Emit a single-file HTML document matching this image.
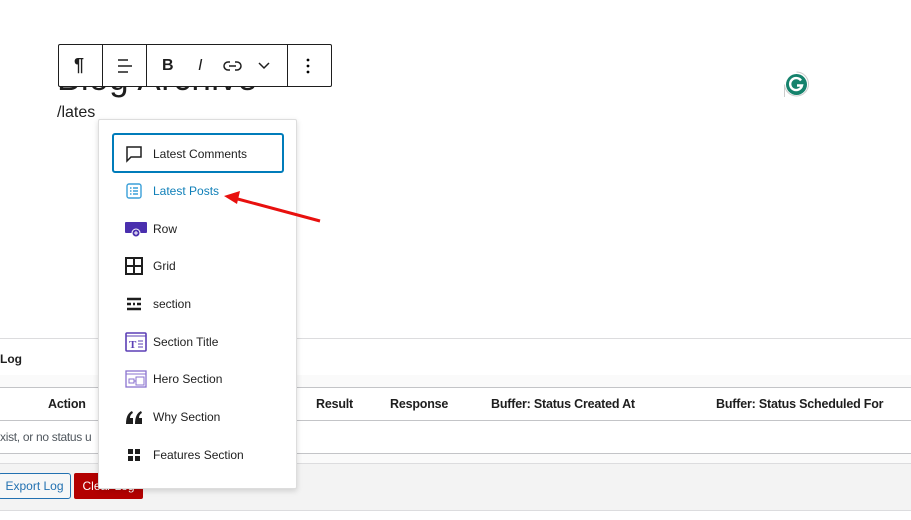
<!DOCTYPE html>
<html><head><meta charset="utf-8"><style>
*{box-sizing:border-box;margin:0;padding:0}
body{width:911px;height:520px;overflow:hidden;background:#fff;font-family:"Liberation Sans",sans-serif;color:#1e1e1e;position:relative}
.abs{position:absolute}
.hl{position:absolute;left:0;width:911px;height:1px;background:#dcdcde}
.th{position:absolute;top:397px;font-size:12.5px;font-weight:bold;letter-spacing:-0.2px}
.tb{position:absolute;left:58px;top:44px;width:274px;height:43px;border:1px solid #1e1e1e;background:#fff;border-radius:2px}
.tb .sep{position:absolute;top:0;width:1px;height:41px;background:#1e1e1e}
.menu{position:absolute;left:98px;top:119px;width:199px;height:370px;background:#fff;border:1px solid #ddd;box-shadow:0 2px 6px rgba(0,0,0,.15);border-radius:2px}
.it{position:absolute;left:0;height:20px;font-size:12px;display:flex;align-items:center}
.it svg{position:absolute;left:26px}
.it span{position:absolute;left:54px;white-space:nowrap}
</style></head><body>
<div class="abs" style="left:57px;top:62px;font-size:35px;color:#1e1e1e;line-height:34px;letter-spacing:0.5px">Blog Archive</div>
<div class="abs" style="left:57px;top:103px;font-size:16px;line-height:20px">/lates</div>
<div class="tb">
 <div class="sep" style="left:43px"></div><div class="sep" style="left:87px"></div><div class="sep" style="left:228px"></div>
 <div class="abs" style="left:15px;top:10px;font-size:18px;font-weight:bold">¶</div>
 <svg class="abs" style="left:57px;top:12px" width="18" height="18"><path d="M2 3h10M2 9h14M2 15h10" stroke="#1e1e1e" stroke-width="1.5"/></svg>
 <div class="abs" style="left:103px;top:12px;font-size:16px;font-weight:bold">B</div>
 <div class="abs" style="left:139px;top:12px;font-size:16px;font-style:italic">I</div>
 <svg class="abs" style="left:164px;top:14px" width="20" height="14"><path d="M7 3H5a4 4 0 0 0 0 8h2M12 3h2a4 4 0 0 1 0 8h-2M6 7h7" stroke="#1e1e1e" stroke-width="1.5" fill="none"/></svg>
 <svg class="abs" style="left:199px;top:17px" width="12" height="8"><path d="M1 1l5 5 5-5" stroke="#1e1e1e" stroke-width="1.5" fill="none"/></svg>
 <svg class="abs" style="left:247px;top:12px" width="4" height="18"><circle cx="2" cy="3" r="1.4"/><circle cx="2" cy="9" r="1.4"/><circle cx="2" cy="15" r="1.4"/></svg>
</div>
<svg class="abs" style="left:783px;top:71px" width="27" height="27"><path d="M13.5 1A12 12 0 1 1 1.5 13.5V26" fill="#fff" stroke="#ccc"/><circle cx="13.5" cy="13.5" r="10.5" fill="#15826c"/><path d="M18 9.5a6 6 0 1 0 1 5h-5" stroke="#fff" stroke-width="2.4" fill="none"/></svg>

<div class="hl" style="top:338px"></div>
<div class="abs" style="left:0;top:352px;font-size:12px;font-weight:bold">Log</div>
<div class="abs" style="left:0;top:375px;width:911px;height:12px;background:#fafafa"></div>
<div class="hl" style="top:387px;background:#c3c4c7"></div>
<div class="th" style="left:48px">Action</div>
<div class="th" style="left:316px">Result</div>
<div class="th" style="left:390px">Response</div>
<div class="th" style="left:491px">Buffer: Status Created At</div>
<div class="th" style="left:716px">Buffer: Status Scheduled For</div>
<div class="hl" style="top:420px;background:#c3c4c7"></div>
<div class="abs" style="left:0;top:430px;font-size:12px;color:#50575e;letter-spacing:-0.3px">xist, or no status u</div>
<div class="hl" style="top:453px;background:#c3c4c7"></div>
<div class="abs" style="left:0;top:454px;width:911px;height:9px;background:#fafafa"></div>
<div class="hl" style="top:463px"></div>
<div class="abs" style="left:0;top:464px;width:911px;height:46px;background:#f3f3f3"></div>
<div class="hl" style="top:510px"></div>
<div class="abs" style="left:-2px;top:473px;width:73px;height:26px;border:1px solid #2271b1;border-radius:3px;background:#f6f7f7;color:#2271b1;font-size:12px;line-height:24px;text-align:center">Export Log</div>
<div class="abs" style="left:74px;top:473px;width:69px;height:26px;background:#b30000;border-radius:2px;color:#fff;font-size:12px;line-height:26px;text-align:center">Clear Log</div>

<div class="menu">
 <div class="abs" style="left:13px;top:13px;width:172px;height:40px;border:2px solid #007cba;border-radius:3px"></div>
 <div class="it" style="top:24px"><svg width="18" height="18"><path d="M2 2h14v10H6l-4 4z" fill="none" stroke="#1e1e1e" stroke-width="1.5"/></svg><span>Latest Comments</span></div>
 <div class="it" style="top:61px;color:#0f7fb8"><svg width="18" height="18"><rect x="2" y="2" width="14" height="14" rx="2" fill="none" stroke="#3a9fd8" stroke-width="1.4"/><path d="M5 6h1.5M8 6h5M5 9h1.5M8 9h5M5 12h1.5M8 12h5" stroke="#3a9fd8" stroke-width="1.6"/></svg><span>Latest Posts</span></div>
 <div class="it" style="top:99px"><svg width="24" height="20"><rect x="0" y="3" width="22" height="11" rx="1" fill="#4a2fae"/><circle cx="11" cy="14" r="4" fill="#4a2fae" stroke="#fff"/><path d="M9 14h4M11 12v4" stroke="#fff"/></svg><span>Row</span></div>
 <div class="it" style="top:136px"><svg width="18" height="18"><rect x="1" y="1" width="16" height="16" fill="none" stroke="#1e1e1e" stroke-width="2"/><path d="M9 1v16M1 9h16" stroke="#1e1e1e" stroke-width="2"/></svg><span>Grid</span></div>
 <div class="it" style="top:174px"><svg width="18" height="18"><path d="M2 4h14M2 9h4M8 9h2M12 9h4M2 14h14" stroke="#1e1e1e" stroke-width="2.4"/></svg><span>section</span></div>
 <div class="it" style="top:212px"><svg width="22" height="20"><rect x="1" y="1" width="20" height="18" rx="1" fill="none" stroke="#5b3fb5" stroke-width="1.6"/><path d="M1 4h20" stroke="#5b3fb5"/><text x="4" y="16" font-size="11" font-weight="bold" fill="#5b3fb5" font-family="Liberation Serif">T</text><path d="M13 9h5M13 12h5M13 15h5" stroke="#5b3fb5"/></svg><span>Section Title</span></div>
 <div class="it" style="top:249px"><svg width="22" height="20"><rect x="1" y="2" width="20" height="16" fill="none" stroke="#8a72cf" stroke-width="1.3"/><path d="M1 5h20M4 10h5v4H4zM11 8h8v8h-8zM9 12h2" stroke="#8a72cf" fill="none"/></svg><span>Hero Section</span></div>
 <div class="it" style="top:287px"><svg width="20" height="18"><path d="M1 16c0-7 2-11 6-13l1 2c-2 1-3 3-3 5h3v6zM10 16c0-7 2-11 6-13l1 2c-2 1-3 3-3 5h3v6z" fill="#1e1e1e"/></svg><span>Why Section</span></div>
 <div class="it" style="top:325px"><svg width="18" height="18"><rect x="3" y="3" width="5" height="5" fill="#1e1e1e"/><rect x="10" y="3" width="5" height="5" fill="#1e1e1e"/><rect x="3" y="10" width="5" height="5" fill="#1e1e1e"/><rect x="10" y="10" width="5" height="5" fill="#1e1e1e"/></svg><span>Features Section</span></div>
</div>
<svg class="abs" style="left:220px;top:188px" width="104" height="40"><path d="M100 33L14 10" stroke="#e8100e" stroke-width="3"/><path d="M4 8l16-5-3 13z" fill="#e8100e"/></svg>
</body></html>
